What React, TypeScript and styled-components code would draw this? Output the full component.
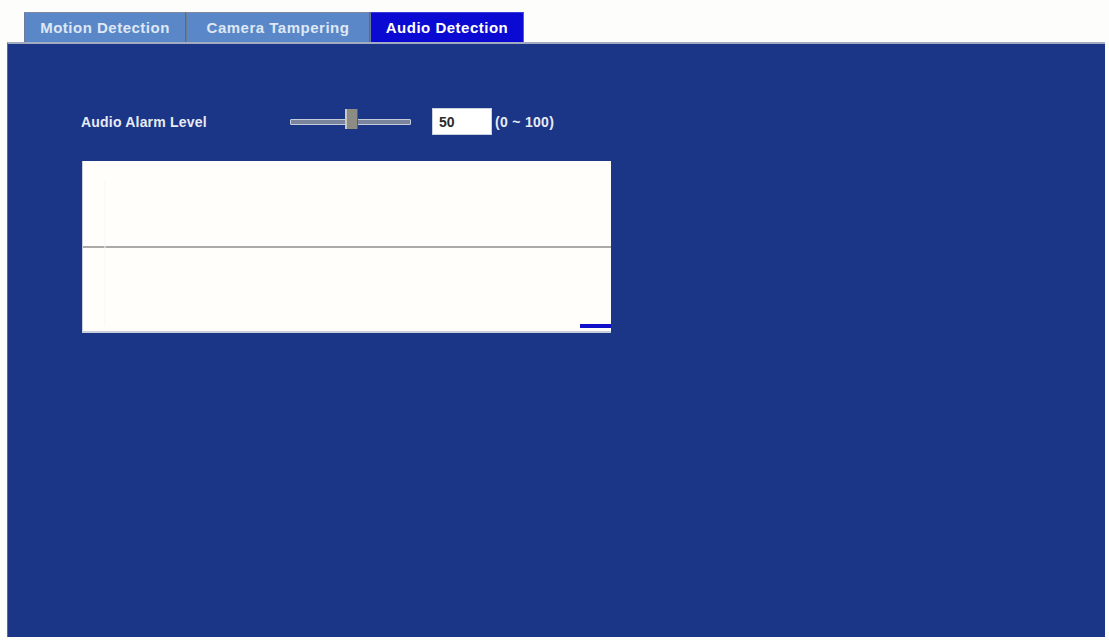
import React from 'react';
import styled, { createGlobalStyle } from 'styled-components';

const Global = createGlobalStyle`
  html, body { margin: 0; padding: 0; background: #ffffff; }
  body { font-family: "Liberation Sans", Arial, sans-serif; }
`;

const Page_ = styled.div({
  width: 1109,
  height: 640,
  display: 'flex',
  flexDirection: 'column',
  background: '#fdfdfb',
});

const TabBar_ = styled.div({
  display: 'flex',
  padding: '12px 0 0 24px',
  height: 30,
});

const Tab_ = styled.div<{ $active?: boolean; $width: number }>(({ $active, $width }) => ({
  display: 'flex',
  alignItems: 'center',
  justifyContent: 'center',
  width: $width,
  height: 30,
  boxSizing: 'border-box',
  fontSize: 15,
  letterSpacing: 0.5,
  fontWeight: 700,
  color: $active ? '#ffffff' : '#dfe7f4',
  background: $active ? '#0a0ad2' : '#5a87c8',
  borderTop: `1px solid ${$active ? '#3a3ad8' : '#7d8aa0'}`,
  borderRight: '1px solid #556a8c',
  borderLeft: '1px solid #6d7c96',
}));

const Panel_ = styled.div({
  flex: 1,
  margin: '0 4px 3px 7px',
  background: '#1b3587',
  borderTop: '2px solid #a3abc2',
  borderLeft: '1px solid #5a6a9c',
  padding: '64px 0 0 73px',
  display: 'flex',
  flexDirection: 'column',
});

const Row_ = styled.div({
  display: 'flex',
  alignItems: 'center',
  height: 27,
});

const Label_ = styled.div({
  width: 209,
  fontSize: 14,
  letterSpacing: 0.2,
  fontWeight: 700,
  color: '#e6ebf6',
});

const Slider_ = styled.div({
  position: 'relative',
  width: 121,
  height: 27,
  display: 'flex',
  alignItems: 'center',
});

const Track_ = styled.div({
  width: '100%',
  height: 6,
  boxSizing: 'border-box',
  border: '1px solid #c4cbd9',
  background: '#7a849c',
  borderRadius: 1,
});

const Thumb_ = styled.div({
  position: 'absolute',
  top: 1,
  width: 13,
  height: 20,
  boxSizing: 'border-box',
  background: '#8c8c84',
  borderLeft: '2px solid #c8c8c0',
  borderRight: '1px solid #5c5c58',
});

const Input_ = styled.div({
  marginLeft: 21,
  width: 60,
  height: 27,
  boxSizing: 'border-box',
  background: '#ffffff',
  border: '1px solid #c9d0e0',
  display: 'flex',
  alignItems: 'center',
  paddingLeft: 6,
  fontSize: 14,
  fontWeight: 700,
  color: '#2c2c2c',
});

const Range_ = styled.div({
  marginLeft: 3,
  fontSize: 14,
  letterSpacing: 0.3,
  fontWeight: 700,
  color: '#e6ebf6',
});

const Chart_ = styled.div({
  marginTop: 26,
  marginLeft: 1,
  width: 529,
  height: 172,
  background: '#fffefb',
  boxSizing: 'border-box',
  borderLeft: '1px solid #c9cfdc',
  borderBottom: '2px solid #c9cfdc',
});

const AudioChart = () => (
  <Chart_>
    <svg width="528" height="170" viewBox="0 0 528 170">
      <line x1="0" y1="86" x2="528" y2="86" stroke="#8e8e8e" strokeWidth="1.5" />
      <line x1="22" y1="20" x2="22" y2="165" stroke="#f7f7f3" strokeWidth="1" />
      <rect x="497" y="163" width="31" height="4" fill="#1010c8" />
    </svg>
  </Chart_>
);

const level = 50;

const App = () => (
  <Page_>
    <Global />
    <TabBar_>
      <Tab_ $width={162}>Motion Detection</Tab_>
      <Tab_ $width={184}>Camera Tampering</Tab_>
      <Tab_ $width={154} $active>
        Audio Detection
      </Tab_>
    </TabBar_>
    <Panel_>
      <Row_>
        <Label_>Audio Alarm Level</Label_>
        <Slider_>
          <Track_ />
          <Thumb_ style={{ left: (level / 100) * 106 + 2 }} />
        </Slider_>
        <Input_>{level}</Input_>
        <Range_>(0 ~ 100)</Range_>
      </Row_>
      <AudioChart />
    </Panel_>
  </Page_>
);

export default App;
